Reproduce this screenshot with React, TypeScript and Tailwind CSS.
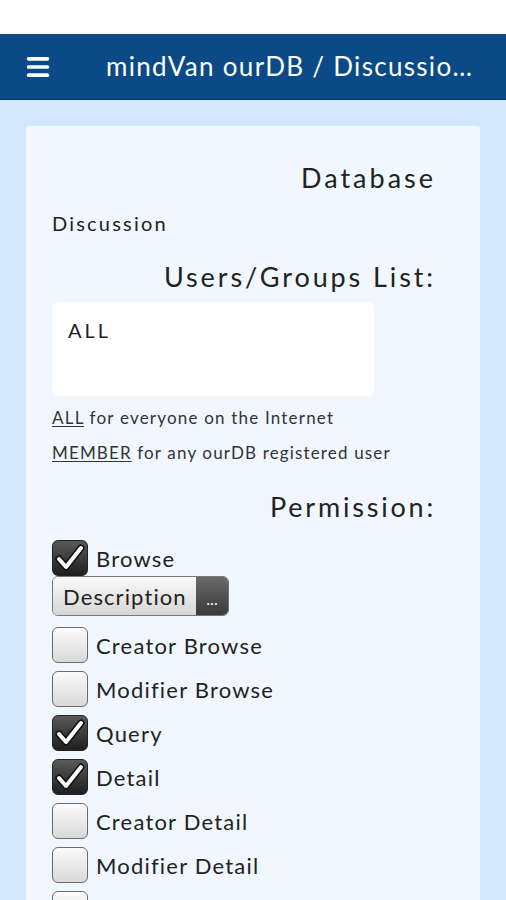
import { Menu } from "lucide-react";

type Perm = { label: string; checked: boolean };

// the last row is cut by the bottom of the screen, only its box shows
const perms: Perm[] = [
  { label: "Creator Browse", checked: false },
  { label: "Modifier Browse", checked: false },
  { label: "Query", checked: true },
  { label: "Detail", checked: true },
  { label: "Creator Detail", checked: false },
  { label: "Modifier Detail", checked: false },
  { label: "", checked: false },
];

function CheckBox({ checked }: { checked: boolean }) {
  if (checked) {
    return (
      <div className="w-9 h-9 shrink-0 rounded-[6px] border border-[#222] bg-gradient-to-b from-[#5a5a5a] to-[#1f1f1f] flex items-center justify-center">
        <svg width="30" height="28" viewBox="0 0 30 28">
          <path
            d="M4 15 L11 23 L26 4"
            fill="none"
            stroke="#111"
            strokeWidth="7"
            strokeLinecap="round"
            strokeLinejoin="round"
          />
          <path
            d="M4 15 L11 23 L26 4"
            fill="none"
            stroke="#fff"
            strokeWidth="4"
            strokeLinecap="round"
            strokeLinejoin="round"
          />
        </svg>
      </div>
    );
  }
  return (
    <div className="w-9 h-9 shrink-0 rounded-[6px] border border-[#6b6b6b] bg-gradient-to-b from-[#fbfbfb] to-[#d9d9d9]" />
  );
}

function Row({ label, checked }: Perm) {
  return (
    <div className="flex items-center gap-2 h-9">
      <CheckBox checked={checked} />
      {label && (
        <span className="text-[22px] text-[#222] tracking-[1.2px] whitespace-nowrap">{label}</span>
      )}
    </div>
  );
}

export default function App() {
  return (
    <div className="w-[506px] h-[900px] overflow-hidden bg-white font-['Lato','Liberation_Sans',sans-serif]">
      <div className="h-[34px] bg-white" />
      <header className="h-[66px] bg-[#0b4a86] flex items-center border-b border-[#083a6a]">
        <Menu size={28} strokeWidth={3.2} className="text-white ml-[24px] shrink-0" />
        <h1 className="ml-[54px] text-white text-[26px] whitespace-nowrap tracking-[1.3px]">
          mindVan ourDB / Discussio…
        </h1>
      </header>
      <main className="h-[800px] bg-[#d3e8fc] px-[26px] pt-[26px]">
        <div className="h-full bg-[#f0f7fe] rounded-t-[3px] pl-[26px] pr-[44px] pt-[38px]">
          <h2 className="text-right text-[27px] leading-none text-[#222] tracking-[3px]">Database</h2>
          <p className="mt-[22px] text-[20px] leading-none text-[#222] tracking-[2.2px]">Discussion</p>
          <h2 className="mt-[30px] text-right text-[27px] leading-none text-[#222] tracking-[2.9px]">
            Users/Groups List:
          </h2>
          <div className="mt-[12px] w-[322px] h-[94px] bg-white rounded-[6px] px-4 pt-[18px] text-[20px] leading-none text-[#222] tracking-[3px]">
            ALL
          </div>
          <p className="mt-[12px] text-[17px] leading-[20px] text-[#333] tracking-[1.2px] whitespace-nowrap">
            <span className="underline underline-offset-2">ALL</span> for everyone on the Internet
          </p>
          <p className="mt-[15px] text-[17px] leading-[20px] text-[#333] tracking-[1.15px] whitespace-nowrap">
            <span className="underline underline-offset-2">MEMBER</span> for any ourDB registered user
          </p>
          <h2 className="mt-[30px] text-right text-[27px] leading-none text-[#222] tracking-[2.8px]">
            Permission:
          </h2>
          <div className="mt-[20px]">
            <Row label="Browse" checked={true} />
            <div className="flex w-[177px] h-[40px] rounded-[6px] border border-[#777] overflow-hidden">
              <div className="flex-1 bg-gradient-to-b from-[#fafafa] to-[#d6d6d6] flex items-center pl-[10px] text-[22px] text-[#222] tracking-[1.1px]">
                Description
              </div>
              <div className="w-[32px] bg-gradient-to-b from-[#6a6a6a] to-[#3a3a3a] flex items-end justify-center pb-[8px] text-white text-[16px] leading-none">
                ...
              </div>
            </div>
            <div className="mt-[11px] flex flex-col gap-2">
              {perms.map((p, i) => (
                <Row key={i} label={p.label} checked={p.checked} />
              ))}
            </div>
          </div>
        </div>
      </main>
    </div>
  );
}
